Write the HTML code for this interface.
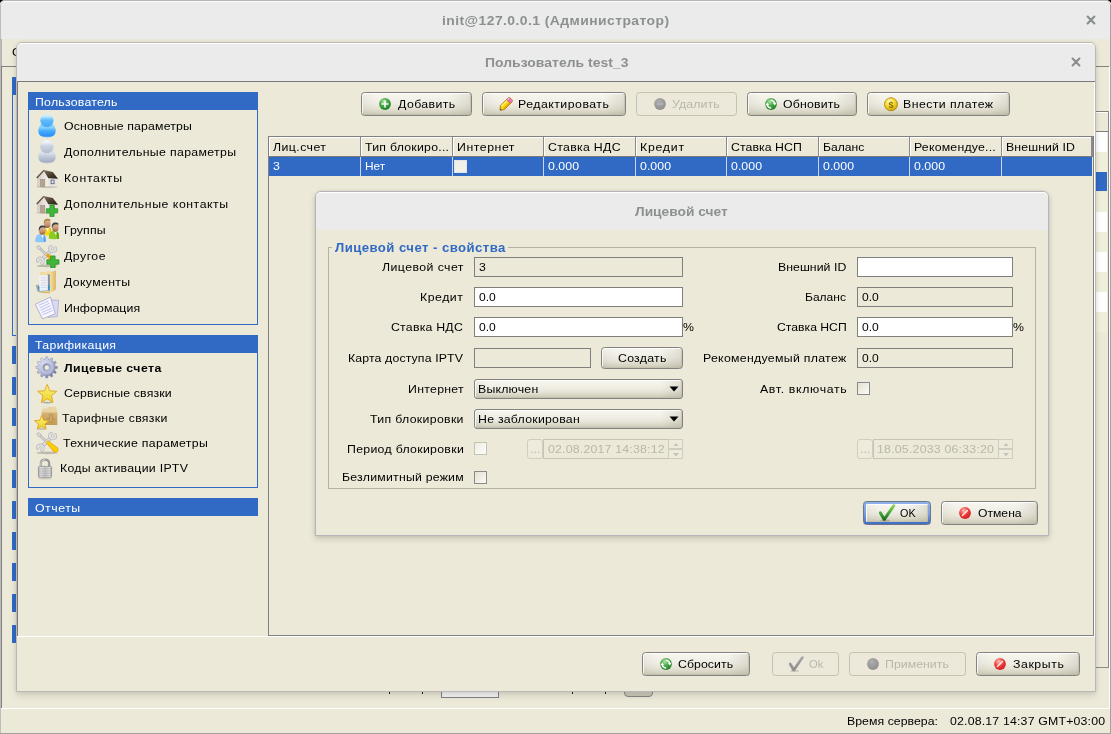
<!DOCTYPE html>
<html><head><meta charset="utf-8"><title>init@127.0.0.1</title>
<style>
html,body{margin:0;padding:0;}
body{width:1111px;height:734px;overflow:hidden;background:#000;position:relative;font-family:"Liberation Sans", sans-serif;}
div,span,svg{position:absolute;box-sizing:border-box;}
.t{white-space:pre;line-height:16px;height:16px;transform-origin:0 0;font-family:"Liberation Sans", sans-serif;}
.btn{border:1px solid #828282;border-radius:3.5px;background:linear-gradient(90deg,rgba(120,115,90,.07),rgba(120,115,90,0) 14px,rgba(120,115,90,0) calc(100% - 22px),rgba(120,115,90,.16)),linear-gradient(180deg,#f8f7f0 0%,#efede3 45%,#d9d6c5 100%);box-shadow:inset 1px 1px 0 rgba(255,255,255,.8),inset -1px -1px 0 rgba(190,186,166,.6),inset 0 -4px 5px -2px rgba(150,145,120,.25);}
.btnd{border:1px solid #c3c1b1;border-radius:3.5px;background:#ede9da;}
.inp{border:1px solid #7f7f7f;background:#fff;}
.inpd{border:1px solid #7f7f7f;background:#ECE9D8;}
.cb{border:1px solid #8a8a8a;background:linear-gradient(135deg,#e4e1d2,#fbfaf6);}
#root{left:0;top:0;width:1111px;height:734px;will-change:transform;}
</style></head><body><div id="root">
<svg width="0" height="0" style="left:0;top:0"><defs>
<radialGradient id="gBlue" cx="50%" cy="30%" r="70%"><stop offset="0" stop-color="#b9e4ff"/><stop offset=".55" stop-color="#4fb4fb"/><stop offset="1" stop-color="#1f8fe8"/></radialGradient>
<radialGradient id="gGray" cx="50%" cy="30%" r="70%"><stop offset="0" stop-color="#eef1f7"/><stop offset=".55" stop-color="#c3ccda"/><stop offset="1" stop-color="#a3aec0"/></radialGradient>
<radialGradient id="gGreen" cx="40%" cy="30%" r="75%"><stop offset="0" stop-color="#b4e2ac"/><stop offset=".45" stop-color="#4aaa48"/><stop offset="1" stop-color="#1c7a24"/></radialGradient>
<radialGradient id="gRed" cx="40%" cy="30%" r="75%"><stop offset="0" stop-color="#ffc4c0"/><stop offset=".5" stop-color="#f03c38"/><stop offset="1" stop-color="#cf1c20"/></radialGradient>
<radialGradient id="gGold" cx="40%" cy="30%" r="75%"><stop offset="0" stop-color="#fffbc0"/><stop offset=".5" stop-color="#f3dc22"/><stop offset="1" stop-color="#c89c12"/></radialGradient>
<radialGradient id="gDis" cx="40%" cy="30%" r="75%"><stop offset="0" stop-color="#adadad"/><stop offset="1" stop-color="#8e8e8e"/></radialGradient>
<linearGradient id="gStar" x1="0" y1="0" x2="0" y2="1"><stop offset="0" stop-color="#fbf48c"/><stop offset="1" stop-color="#ead21e"/></linearGradient>
<linearGradient id="gGear" x1="0" y1="0" x2="1" y2="1"><stop offset="0" stop-color="#fafbff"/><stop offset=".4" stop-color="#c0c5de"/><stop offset="1" stop-color="#555c88"/></linearGradient>
<linearGradient id="gBox" x1="0" y1="0" x2="0" y2="1"><stop offset="0" stop-color="#d6b274"/><stop offset="1" stop-color="#c39a52"/></linearGradient>
<linearGradient id="gLock" x1="0" y1="0" x2="1" y2="0"><stop offset="0" stop-color="#b4b4b4"/><stop offset=".18" stop-color="#e4e4e4"/><stop offset=".5" stop-color="#c4c4c4"/><stop offset=".84" stop-color="#e0e0e0"/><stop offset="1" stop-color="#b0b0b0"/></linearGradient>
<linearGradient id="gWallF" x1="0" y1="0" x2="1" y2="0"><stop offset="0" stop-color="#d5cac4"/><stop offset="1" stop-color="#f3eeea"/></linearGradient>
<linearGradient id="gRoof" x1="0" y1="0" x2="1" y2="1"><stop offset="0" stop-color="#8a7a5c"/><stop offset=".5" stop-color="#4e4230"/><stop offset="1" stop-color="#221d14"/></linearGradient>
<linearGradient id="gSkin" x1="0" y1="0" x2="0" y2="1"><stop offset="0" stop-color="#e2b896"/><stop offset=".6" stop-color="#c89876"/><stop offset="1" stop-color="#8e5e3e"/></linearGradient>
<linearGradient id="gHandle" x1="0" y1="1" x2="1" y2="0"><stop offset="0" stop-color="#f29a08"/><stop offset=".5" stop-color="#f8d400"/><stop offset="1" stop-color="#f2a20c"/></linearGradient>
<linearGradient id="gFold" x1="0" y1="0" x2="1" y2="0"><stop offset="0" stop-color="#f7dfa4"/><stop offset="1" stop-color="#dcb465"/></linearGradient>
<radialGradient id="gGear2" cx="35%" cy="30%" r="80%"><stop offset="0" stop-color="#dfe2f2"/><stop offset="1" stop-color="#a4aacd"/></radialGradient>
<linearGradient id="gBlueH" x1="0" y1="0" x2="0" y2="1"><stop offset="0" stop-color="#d6f3ff"/><stop offset=".2" stop-color="#bfeaff"/><stop offset=".5" stop-color="#5bbcff"/><stop offset="1" stop-color="#49a8f6"/></linearGradient>
<linearGradient id="gBlueB" x1="0" y1="0" x2="0" y2="1"><stop offset="0" stop-color="#8fd6ff"/><stop offset=".3" stop-color="#86d2ff"/><stop offset=".55" stop-color="#44abff"/><stop offset=".88" stop-color="#2f92f8"/><stop offset="1" stop-color="#74b6f4"/></linearGradient>
<linearGradient id="gBlueS" x1="0" y1="0" x2="0" y2="1"><stop offset="0" stop-color="#3f9cec" stop-opacity="0"/><stop offset="1" stop-color="#2f8ce0"/></linearGradient>
<linearGradient id="gGrayH" x1="0" y1="0" x2="0" y2="1"><stop offset="0" stop-color="#f6f8fc"/><stop offset=".2" stop-color="#eceff6"/><stop offset=".5" stop-color="#c9d1de"/><stop offset="1" stop-color="#b5bfcf"/></linearGradient>
<linearGradient id="gGrayB" x1="0" y1="0" x2="0" y2="1"><stop offset="0" stop-color="#dfe4ee"/><stop offset=".3" stop-color="#d8dee9"/><stop offset=".55" stop-color="#bcc6d5"/><stop offset=".88" stop-color="#a5b0c3"/><stop offset="1" stop-color="#c1c9d7"/></linearGradient>
<linearGradient id="gGrayS" x1="0" y1="0" x2="0" y2="1"><stop offset="0" stop-color="#98a4b8" stop-opacity="0"/><stop offset="1" stop-color="#8e9ab0"/></linearGradient>
<linearGradient id="gChk" x1="0" y1="0" x2="0" y2="1"><stop offset="0" stop-color="#86d456"/><stop offset=".55" stop-color="#3fa63a"/><stop offset="1" stop-color="#1a6e1e"/></linearGradient>
<linearGradient id="gChkD" x1="0" y1="0" x2="0" y2="1"><stop offset="0" stop-color="#a6a6a6"/><stop offset="1" stop-color="#8c8c8c"/></linearGradient>
<linearGradient id="gGear3" x1="0" y1="0" x2="1" y2="1"><stop offset="0" stop-color="#7f87b2"/><stop offset="1" stop-color="#b9bedb"/></linearGradient>
</defs></svg>
<div style="left:0;top:0;width:1111px;height:734px;background:#ECE9D8;border-radius:5px 5px 0 0;overflow:hidden"></div>
<div style="left:0px;top:0px;width:1111px;height:39px;background:#EBEBEB;border-radius:5px 5px 0 0;border-top:1px solid #b6b6b6;box-shadow:inset 0 1px 0 #fbfbfb,inset 1px 0 0 #bcbcbc,inset -1px 0 0 #a8a8a8;"></div>
<div style="left:0px;top:5px;width:1px;height:729px;background:#bcbcbc;"></div>
<div style="left:1110px;top:5px;width:1px;height:729px;background:#a3a3a3;"></div>
<div style="left:0px;top:733px;width:1111px;height:1px;background:#a3a3a3;"></div>
<span class="t" style="left:441.5px;top:12.5px;color:#8d9091;font-size:13px;letter-spacing:0.4px;transform:scaleX(1.07);font-weight:bold;">init@127.0.0.1 (Администратор)</span>
<svg style="left:1086px;top:15px" width="10" height="10" viewBox="0 0 10 10"><path d="M1.6 1.6 L8.4 8.4 M8.4 1.6 L1.6 8.4" stroke="#8a8d8e" stroke-width="2.1" stroke-linecap="round"/></svg>
<span class="t" style="left:12px;top:44.02px;color:#000;font-size:11.5px;letter-spacing:0px;transform:scaleX(1.07);">С</span>
<div style="left:1px;top:66px;width:1108px;height:1px;background:#808080;"></div>
<div style="left:1px;top:66px;width:1px;height:642px;background:#808080;"></div>
<div style="left:1px;top:39px;width:1px;height:27px;background:#b0b0b0;"></div>
<div style="left:1109px;top:67px;width:1px;height:641px;background:#fff;"></div>
<div style="left:12px;top:77px;width:6px;height:18px;background:#316AC5;"></div>
<div style="left:12px;top:95px;width:1px;height:241px;background:#316AC5;"></div>
<div style="left:12px;top:335px;width:6px;height:1px;background:#316AC5;"></div>
<div style="left:12px;top:346px;width:6px;height:18px;background:#316AC5;"></div>
<div style="left:12px;top:377px;width:6px;height:18px;background:#316AC5;"></div>
<div style="left:12px;top:408px;width:6px;height:18px;background:#316AC5;"></div>
<div style="left:12px;top:439px;width:6px;height:18px;background:#316AC5;"></div>
<div style="left:12px;top:470px;width:6px;height:18px;background:#316AC5;"></div>
<div style="left:12px;top:501px;width:6px;height:18px;background:#316AC5;"></div>
<div style="left:12px;top:532px;width:6px;height:18px;background:#316AC5;"></div>
<div style="left:12px;top:563px;width:6px;height:18px;background:#316AC5;"></div>
<div style="left:12px;top:594px;width:6px;height:18px;background:#316AC5;"></div>
<div style="left:12px;top:625px;width:6px;height:18px;background:#316AC5;"></div>
<div style="left:1090px;top:111px;width:19px;height:21px;background:#ECE9D8;border:1px solid #808080;box-shadow:inset 1px 1px 0 #fff;"></div>
<div style="left:1090px;top:132px;width:17px;height:20px;background:#fff;"></div>
<div style="left:1090px;top:152px;width:17px;height:20px;background:#F0EFDC;"></div>
<div style="left:1090px;top:172px;width:17px;height:19px;background:#316AC5;"></div>
<div style="left:1090px;top:192px;width:17px;height:20px;background:#F0EFDC;"></div>
<div style="left:1090px;top:212px;width:17px;height:20px;background:#fff;"></div>
<div style="left:1090px;top:232px;width:17px;height:20px;background:#F0EFDC;"></div>
<div style="left:1090px;top:252px;width:17px;height:20px;background:#fff;"></div>
<div style="left:1090px;top:272px;width:17px;height:20px;background:#F0EFDC;"></div>
<div style="left:1090px;top:292px;width:17px;height:20px;background:#fff;"></div>
<div style="left:1090px;top:312px;width:17px;height:20px;background:#F0EFDC;"></div>
<div style="left:1108px;top:111px;width:1px;height:557px;background:#8c8c8c;"></div>
<div style="left:1090px;top:667px;width:19px;height:1px;background:#8c8c8c;"></div>
<div style="left:441px;top:686px;width:58px;height:12px;background:#f4f4f4;border:1px solid #808080;"></div>
<div style="left:624px;top:680px;width:29px;height:17px;border:1px solid #868686;border-radius:4px;background:linear-gradient(180deg,#f1efe4,#c9c6b5);"></div>
<div style="left:389px;top:691px;width:1px;height:3px;background:#222;"></div>
<div style="left:422px;top:691px;width:1px;height:3px;background:#222;"></div>
<div style="left:572px;top:691px;width:1px;height:3px;background:#222;"></div>
<div style="left:605px;top:691px;width:1px;height:3px;background:#222;"></div>
<div style="left:1px;top:708px;width:1109px;height:1px;background:#fff;"></div>
<span class="t" style="left:846.5px;top:713.02px;color:#000;font-size:11.5px;letter-spacing:0.03px;transform:scaleX(1.07);">Время сервера:</span>
<span class="t" style="left:949.5px;top:713.02px;color:#000;font-size:11.5px;letter-spacing:0.17px;transform:scaleX(1.07);">02.08.17 14:37 GMT+03:00</span>
<div style="left:16px;top:42px;width:1080px;height:650px;background:#ECE9D8;border:1px solid #b8b8b8;border-radius:6px 6px 0 0;box-shadow:0 4px 6px rgba(0,0,0,.11),0 0 4px rgba(0,0,0,.07);"></div>
<div style="left:17px;top:43px;width:1078px;height:38px;background:#EBEBEB;border-radius:5px 5px 0 0;border-top:1px solid #fff;"></div>
<div style="left:17px;top:81px;width:1078px;height:1px;background:#7a7a7a;"></div>
<div style="left:17px;top:82px;width:1px;height:554px;background:#7a7a7a;"></div>
<div style="left:1094px;top:82px;width:1px;height:555px;background:#fff;"></div>
<div style="left:17px;top:636px;width:1078px;height:1px;background:#fff;"></div>
<span class="t" style="left:485px;top:54.5px;color:#8d9091;font-size:13px;letter-spacing:0.04px;transform:scaleX(1.07);font-weight:bold;">Пользователь test_3</span>
<svg style="left:1071px;top:57px" width="10" height="10" viewBox="0 0 10 10"><path d="M1.6 1.6 L8.4 8.4 M8.4 1.6 L1.6 8.4" stroke="#8a8d8e" stroke-width="2.1" stroke-linecap="round"/></svg>
<div style="left:28px;top:92px;width:230px;height:233px;border:1px solid #316AC5;"></div>
<div style="left:28px;top:92px;width:230px;height:18px;background:#316AC5;"></div>
<span class="t" style="left:34.5px;top:94.02px;color:#fff;font-size:11.5px;letter-spacing:0.22px;transform:scaleX(1.07);">Пользователь</span>
<span class="t" style="left:63.5px;top:118.02px;color:#000;font-size:11.5px;letter-spacing:0.15px;transform:scaleX(1.07);">Основные параметры</span>
<span class="t" style="left:63.5px;top:144.02px;color:#000;font-size:11.5px;letter-spacing:0.32px;transform:scaleX(1.07);">Дополнительные параметры</span>
<span class="t" style="left:63.5px;top:170.02px;color:#000;font-size:11.5px;letter-spacing:0.65px;transform:scaleX(1.07);">Контакты</span>
<span class="t" style="left:63.5px;top:196.02px;color:#000;font-size:11.5px;letter-spacing:0.5px;transform:scaleX(1.07);">Дополнительные контакты</span>
<span class="t" style="left:63.5px;top:222.02px;color:#000;font-size:11.5px;letter-spacing:0.09px;transform:scaleX(1.07);">Группы</span>
<span class="t" style="left:63.5px;top:248.02px;color:#000;font-size:11.5px;letter-spacing:0.45px;transform:scaleX(1.07);">Другое</span>
<span class="t" style="left:63.5px;top:274.02px;color:#000;font-size:11.5px;letter-spacing:0.32px;transform:scaleX(1.07);">Документы</span>
<span class="t" style="left:63.5px;top:300.02px;color:#000;font-size:11.5px;letter-spacing:0.08px;transform:scaleX(1.07);">Информация</span>
<svg style="left:35px;top:113px" width="24" height="26" viewBox="0 0 24 26"><path d="M3.3 18 Q3.3 13 7 10.4 L17 10.4 Q20.7 13 20.7 18 Q20.7 24.4 12 24.4 Q3.3 24.4 3.3 18 Z" fill="url(#gBlueB)"/><ellipse cx="11.9" cy="7.6" rx="6.7" ry="6.6" fill="url(#gBlueS)" opacity=".55"/><ellipse cx="11.9" cy="7.2" rx="6.4" ry="6.3" fill="url(#gBlueH)"/></svg>
<svg style="left:35px;top:139px" width="24" height="26" viewBox="0 0 24 26"><path d="M3.3 18 Q3.3 13 7 10.4 L17 10.4 Q20.7 13 20.7 18 Q20.7 24.4 12 24.4 Q3.3 24.4 3.3 18 Z" fill="url(#gGrayB)"/><ellipse cx="11.9" cy="7.6" rx="6.7" ry="6.6" fill="url(#gGrayS)" opacity=".55"/><ellipse cx="11.9" cy="7.2" rx="6.4" ry="6.3" fill="url(#gGrayH)"/></svg>
<svg style="left:35px;top:166px" width="24" height="26" viewBox="0 0 24 26"><ellipse cx="12" cy="20.8" rx="10.6" ry="1" fill="#000" opacity=".22"/><path d="M2.2 11.2 L8.5 4.6 L13 11.4 L13 20.6 L2.2 20.6Z" fill="url(#gWallF)"/><path d="M13 11.4 L22.4 12 L22.4 20.4 L13 20.6Z" fill="#ebe6e0"/><path d="M8.4 3.9 L17.8 6 L23 12.7 L13.3 12.3 Z" fill="url(#gRoof)"/><path d="M1.2 11.6 L8.4 3.9 L9.4 4.7 L2.3 12.4 Z" fill="#5e5040"/><rect x="5.4" y="13.4" width="4.4" height="7.2" fill="#b5a28f" stroke="#9a8a7a" stroke-width=".5"/><rect x="16.1" y="14.1" width="3" height="3.6" fill="#dfe6f0" stroke="#5b6684" stroke-width=".9"/></svg>
<svg style="left:35px;top:192px" width="24" height="26" viewBox="0 0 24 26"><ellipse cx="12" cy="20.8" rx="10.6" ry="1" fill="#000" opacity=".22"/><path d="M2.2 11.2 L8.5 4.6 L13 11.4 L13 20.6 L2.2 20.6Z" fill="url(#gWallF)"/><path d="M13 11.4 L22.4 12 L22.4 20.4 L13 20.6Z" fill="#ebe6e0"/><path d="M8.4 3.9 L17.8 6 L23 12.7 L13.3 12.3 Z" fill="url(#gRoof)"/><path d="M1.2 11.6 L8.4 3.9 L9.4 4.7 L2.3 12.4 Z" fill="#5e5040"/><rect x="5.4" y="13.4" width="4.4" height="7.2" fill="#b5a28f" stroke="#9a8a7a" stroke-width=".5"/><rect x="16.1" y="14.1" width="3" height="3.6" fill="#dfe6f0" stroke="#5b6684" stroke-width=".9"/><path d="M14.948 13.100000000000001 h4.104 v3.648 h3.648 v4.104 h-3.648 v3.648 h-4.104 v-3.648 h-3.648 v-4.104 h3.648 Z" fill="#3fb53a" stroke="#1f8f22" stroke-width=".7"/></svg>
<svg style="left:35px;top:218px" width="27" height="26" viewBox="0 0 27 26"><path d="M8.600000000000001 16.9 Q8.400000000000002 9.3 12.3 9.1 Q16.2 9.3 16.0 16.9 Q12.3 18.1 8.600000000000001 16.9Z" fill="#f6d616"/><path d="M14.5 10.3 L15.9 9.899999999999999 Q16.2 11.3 16.0 16.9 L15.5 17.3Z" fill="#e2b800"/><path d="M10.9 9.7 L13.700000000000001 9.7 L13.100000000000001 14.100000000000001Z" fill="#fff" opacity=".85"/><ellipse cx="12.3" cy="5.7" rx="3.3" ry="4.3" fill="url(#gSkin)"/><path d="M8.8 6.3 Q8.100000000000001 0.7000000000000002 12.3 0.7000000000000002 Q15.9 0.5 15.5 3.0999999999999996 Q12.8 1.9 10.5 3.3 Q9.700000000000001 4.7 8.8 6.3Z" fill="#a98a3c"/><path d="M13.700000000000003 20.6 Q13.500000000000004 13 18.900000000000002 12.8 Q24.3 13 24.1 20.6 Q18.900000000000002 21.8 13.700000000000003 20.6Z" fill="#8ccc22"/><path d="M21.1 14 L22.500000000000004 13.6 Q24.3 15 24.1 20.6 L22.1 21Z" fill="#62a80e"/><path d="M18.900000000000002 13.4 L21.7 13.4 L21.1 17.8Z" fill="#fff" opacity=".85"/><ellipse cx="20.3" cy="9.4" rx="3.3" ry="4.3" fill="url(#gSkin)"/><path d="M16.8 10 Q16.1 4.4 20.3 4.4 Q23.900000000000002 4.2 23.5 6.8 Q20.8 5.6 18.5 7 Q17.7 8.4 16.8 10Z" fill="#3c4044"/><path d="M0.09999999999999964 23.7 Q-0.10000000000000037 16.1 5.5 15.899999999999999 Q11.1 16.1 10.9 23.7 Q5.5 24.9 0.09999999999999964 23.7Z" fill="#8ec8fa"/><path d="M7.7 17.1 L9.1 16.7 Q11.1 18.1 10.9 23.7 L8.7 24.1Z" fill="#5ea6ee"/><path d="M5.9 16.5 L8.7 16.5 L8.1 20.9Z" fill="#fff" opacity=".85"/><ellipse cx="7.3" cy="12.5" rx="3.3" ry="4.3" fill="url(#gSkin)"/><path d="M3.8 13.1 Q3.0999999999999996 7.5 7.3 7.5 Q10.9 7.3 10.5 9.899999999999999 Q7.8 8.7 5.5 10.1 Q4.699999999999999 11.5 3.8 13.1Z" fill="#3c4044"/></svg>
<svg style="left:35px;top:244px" width="25" height="24" viewBox="0 0 25 24"><ellipse cx="12" cy="21.9" rx="10.6" ry="1.3" fill="#000" opacity=".2"/><path d="M3.6 3.4 L12.4 11.4" fill="none" stroke="#a4a4a4" stroke-width="2.6" stroke-linecap="round"/><path d="M3.6 3.4 L12.4 11.4" fill="none" stroke="#d4d4d4" stroke-width="1.5" stroke-linecap="round"/><ellipse cx="3.9" cy="3.6" rx="2.1" ry="1.6" transform="rotate(40 3.9 3.6)" fill="#dedede" stroke="#a8a8a8" stroke-width=".6"/><path d="M6.9 15.3 L16.2 6.7" fill="none" stroke="#b0b0b0" stroke-width="3.8" stroke-linecap="butt"/><path d="M6.9 15.3 L16.2 6.7" fill="none" stroke="#d8d8d8" stroke-width="2.8" stroke-linecap="butt"/><path d="M2.6 17 A2.7 2.7 0 1 1 6.96 19.13" fill="none" stroke="#b0b0b0" stroke-width="3.3" stroke-linecap="round"/><path d="M2.6 17 A2.7 2.7 0 1 1 6.96 19.13" fill="none" stroke="#e0e0e0" stroke-width="2.2" stroke-linecap="round"/><path d="M20.31 4.1 A2.7 2.7 0 1 1 16.08 2.64" fill="none" stroke="#b0b0b0" stroke-width="3.3" stroke-linecap="round"/><path d="M20.31 4.1 A2.7 2.7 0 1 1 16.08 2.64" fill="none" stroke="#e0e0e0" stroke-width="2.2" stroke-linecap="round"/><path d="M11 11.4 L13 9.7 L17.4 13.6 L15 16 Z" fill="#f2a80c" stroke="#d88a00" stroke-width=".5"/><path d="M19.6 20.2 L21.4 19.6 L21.6 21 Z" fill="#f09a10"/><path d="M15.703999999999999 11.9 h4.3919999999999995 v3.904 h3.904 v4.3919999999999995 h-3.904 v3.904 h-4.3919999999999995 v-3.904 h-3.904 v-4.3919999999999995 h3.904 Z" fill="#3fb53a" stroke="#1f8f22" stroke-width=".7"/></svg>
<svg style="left:35px;top:270px" width="24" height="24" viewBox="0 0 24 24"><path d="M0.6 15 L4.2 14.4 L4.6 22.6 L2.2 21.4 Z" fill="#000" opacity=".22"/><path d="M5 2.6 L15.4 1.6 L15.4 22.6 L5 22.2 Z" fill="#e9c982"/><path d="M5 2.6 L15.4 1.6 L15.4 4.4 L5 5.2 Z" fill="#f3dca0"/><path d="M12.6 4.4 L15 4.2 L15 17.4 L12.6 17.6 Z" fill="#8493a4"/><path d="M2.3 16.6 L15.8 14.6 L15.8 20.6 L4 21.4 Z" fill="#3b92cb"/><path d="M4.1 5.3 L12.7 4.9 L12.9 20.6 L4.5 21 Z" fill="#f0f0f8"/><path d="M5.8 8 L11.4 7.8 M5.8 10.4 L11.4 10.2 M5.8 12.8 L11.4 12.6 M5.8 15.2 L11.4 15 M5.8 17.6 L11.4 17.4" stroke="#cfd2e2" stroke-width=".8"/><path d="M14.9 2.2 L20.9 0.5 L20.9 19.4 L14.9 23.2 Z" fill="url(#gFold)"/><path d="M5 22.2 L15 22.6 L14.9 23.2 L7 22.9 Z" fill="#c9a050"/></svg>
<svg style="left:35px;top:296px" width="25" height="24" viewBox="0 0 25 24"><path d="M14.4 4 L23.7 4.3 L22.2 20.5 L13 21.3 Z" fill="#d9daf5" stroke="#a9abcb" stroke-width=".8"/><path d="M0.3 8.3 L15.5 1.1 L20.3 17.8 L7.5 22.8 Z" fill="#f6f6ff" stroke="#a9abcb" stroke-width=".9"/><path d="M3.4 9.6 L13.4 5 M4.5 11.9 L14.5 7.3 M5.6 14.2 L15.6 9.6 M6.7 16.5 L16.7 11.9 M7.8 18.8 L17.8 14.2" stroke="#c6c7ee" stroke-width="1.1"/></svg>
<div style="left:28px;top:335px;width:230px;height:153px;border:1px solid #316AC5;"></div>
<div style="left:28px;top:335px;width:230px;height:18px;background:#316AC5;"></div>
<span class="t" style="left:34.5px;top:337.02px;color:#fff;font-size:11.5px;letter-spacing:0.32px;transform:scaleX(1.07);">Тарификация</span>
<span class="t" style="left:64px;top:360.02px;color:#000;font-size:11.5px;letter-spacing:0.4px;transform:scaleX(1.07);font-weight:bold;">Лицевые счета</span>
<span class="t" style="left:63.6px;top:385.02px;color:#000;font-size:11.5px;letter-spacing:0.16px;transform:scaleX(1.07);">Сервисные связки</span>
<span class="t" style="left:62px;top:410.02px;color:#000;font-size:11.5px;letter-spacing:0.32px;transform:scaleX(1.07);">Тарифные связки</span>
<span class="t" style="left:63px;top:435.02px;color:#000;font-size:11.5px;letter-spacing:0.29px;transform:scaleX(1.07);">Технические параметры</span>
<span class="t" style="left:60.4px;top:460.02px;color:#000;font-size:11.5px;letter-spacing:0.26px;transform:scaleX(1.07);">Коды активации IPTV</span>
<svg style="left:35px;top:356px" width="24" height="24" viewBox="0 0 24 24"><polygon points="10.79,0.74 12.61,0.74 13.10,3.22 14.57,3.61 16.24,1.71 17.82,2.62 17.01,5.02 18.08,6.09 20.48,5.28 21.39,6.86 19.49,8.53 19.88,10.00 22.36,10.49 22.36,12.31 19.88,12.80 19.49,14.27 21.39,15.94 20.48,17.52 18.08,16.71 17.01,17.78 17.82,20.18 16.24,21.09 14.57,19.19 13.10,19.58 12.61,22.06 10.79,22.06 10.30,19.58 8.83,19.19 7.16,21.09 5.58,20.18 6.39,17.78 5.32,16.71 2.92,17.52 2.01,15.94 3.91,14.27 3.52,12.80 1.04,12.31 1.04,10.49 3.52,10.00 3.91,8.53 2.01,6.86 2.92,5.28 5.32,6.09 6.39,5.02 5.58,2.62 7.16,1.71 8.83,3.61 10.30,3.22" fill="url(#gGear)" stroke="#7b82aa" stroke-width=".5" stroke-linejoin="round"/><circle cx="11.7" cy="11.4" r="7.4" fill="url(#gGear2)"/><circle cx="11.7" cy="11.4" r="4.2" fill="url(#gGear3)"/><circle cx="11.8" cy="11.5" r="2.2" fill="#efecd8"/></svg>
<svg style="left:35px;top:381px" width="24" height="24" viewBox="0 0 24 24"><ellipse cx="12.2" cy="21.6" rx="5" ry=".9" fill="#000" opacity=".25"/><polygon points="12.20,3.40 14.79,9.84 21.71,10.31 16.38,14.76 18.08,21.49 12.20,17.80 6.32,21.49 8.02,14.76 2.69,10.31 9.61,9.84" fill="url(#gStar)" stroke="#e0a41c" stroke-width=".9" stroke-linejoin="round"/></svg>
<svg style="left:34px;top:405px" width="25" height="25" viewBox="0 0 25 25"><path d="M7.7 7.2 L23.3 7.2 L23.3 20 L7.7 20 Z" fill="url(#gBox)"/><path d="M9.4 1.8 L22 1.8 L23.3 7.2 L7.7 7.2 Z" fill="#ead3a2"/><rect x="9.6" y="2.2" width="4" height="1.2" fill="#e8eef6"/><path d="M15.4 9.6 h3 v4.2 h2.2 l-3.7 4.4 l-3.7 -4.4 h2.2 Z" fill="none" stroke="#a8884c" stroke-width=".8" opacity=".8"/><ellipse cx="7.7" cy="24" rx="4.2" ry=".8" fill="#000" opacity=".22"/><polygon points="7.70,10.40 9.67,15.29 14.93,15.65 10.88,19.03 12.17,24.15 7.70,21.34 3.23,24.15 4.52,19.03 0.47,15.65 5.73,15.29" fill="url(#gStar)" stroke="#e0a41c" stroke-width=".9" stroke-linejoin="round"/></svg>
<svg style="left:35px;top:431px" width="25" height="24" viewBox="0 0 25 24"><ellipse cx="12" cy="21.9" rx="10.6" ry="1.3" fill="#000" opacity=".2"/><path d="M3.6 3.4 L12.4 11.4" fill="none" stroke="#a4a4a4" stroke-width="2.6" stroke-linecap="round"/><path d="M3.6 3.4 L12.4 11.4" fill="none" stroke="#d4d4d4" stroke-width="1.5" stroke-linecap="round"/><ellipse cx="3.9" cy="3.6" rx="2.1" ry="1.6" transform="rotate(40 3.9 3.6)" fill="#dedede" stroke="#a8a8a8" stroke-width=".6"/><path d="M6.9 15.3 L16.2 6.7" fill="none" stroke="#b0b0b0" stroke-width="3.8" stroke-linecap="butt"/><path d="M6.9 15.3 L16.2 6.7" fill="none" stroke="#d8d8d8" stroke-width="2.8" stroke-linecap="butt"/><path d="M2.6 17 A2.7 2.7 0 1 1 6.96 19.13" fill="none" stroke="#b0b0b0" stroke-width="3.3" stroke-linecap="round"/><path d="M2.6 17 A2.7 2.7 0 1 1 6.96 19.13" fill="none" stroke="#e0e0e0" stroke-width="2.2" stroke-linecap="round"/><path d="M20.31 4.1 A2.7 2.7 0 1 1 16.08 2.64" fill="none" stroke="#b0b0b0" stroke-width="3.3" stroke-linecap="round"/><path d="M20.31 4.1 A2.7 2.7 0 1 1 16.08 2.64" fill="none" stroke="#e0e0e0" stroke-width="2.2" stroke-linecap="round"/><path d="M11 11.5 L13 9.7 L22.6 16.8 Q24.2 19 22.4 20.8 Q20.2 22.2 18.2 20.2 Z" fill="url(#gHandle)" stroke="#e09000" stroke-width=".5"/></svg>
<svg style="left:33px;top:456px" width="24" height="24" viewBox="0 0 24 24"><path d="M7.8 11 V7.6 Q7.8 3.6 12 3.6 Q16.2 3.6 16.2 7.6 V11" fill="none" stroke="#9a9a9a" stroke-width="2.2"/><path d="M7.8 11 V7.6 Q7.8 3.6 12 3.6" fill="none" stroke="#d0d0d0" stroke-width="1"/><rect x="5.4" y="10.4" width="13.2" height="11" rx="1.2" fill="url(#gLock)" stroke="#7f7f7f" stroke-width=".6"/><path d="M5.6 12.8 h12.8 M5.6 15 h12.8 M5.6 17.2 h12.8 M5.6 19.4 h12.8" stroke="#8a8a8a" stroke-width=".6" opacity=".7"/><ellipse cx="12" cy="22.6" rx="7" ry="1" fill="#000" opacity=".12"/></svg>
<div style="left:28px;top:498px;width:230px;height:18px;background:#316AC5;"></div>
<span class="t" style="left:34.6px;top:500.02px;color:#fff;font-size:11.5px;letter-spacing:0.5px;transform:scaleX(1.07);">Отчеты</span>
<div class="btn" style="left:361px;top:92px;width:111px;height:24px;"></div>
<svg style="left:376.5px;top:96px" width="16" height="16" viewBox="0 0 16 16"><circle cx="8" cy="8" r="5.9" fill="url(#gGreen)"/><path d="M8 4.5 V11.5 M4.5 8 H11.5" stroke="#fff" stroke-width="1.7" opacity=".92"/></svg>
<span class="t" style="left:398px;top:96.02px;color:#000;font-size:11.5px;letter-spacing:0.38px;transform:scaleX(1.07);">Добавить</span>
<div class="btn" style="left:482px;top:92px;width:144px;height:24px;"></div>
<svg style="left:499px;top:97px" width="15" height="15" viewBox="0 0 15 15"><path d="M1.1 13.2 L1.3 8.8 L7.6 2.5 L11.5 6.4 L5.2 12.7 Z" fill="#fcd40a" stroke="#a8771c" stroke-width=".9" stroke-linejoin="round"/><path d="M2.4 9.2 L8.2 3.4" stroke="#fff27a" stroke-width="1.4"/><path d="M4.8 11.8 L10.6 6" stroke="#e9a406" stroke-width="1.5"/><path d="M7.6 2.5 L9.3 0.8 Q10.2 0.1 11.1 0.9 L13.1 2.9 Q13.9 3.8 13.2 4.7 L11.5 6.4 Z" fill="#f56ec8" stroke="#a8771c" stroke-width=".8" stroke-linejoin="round"/><path d="M8.6 2.6 L10 1.3" stroke="#ffc0ea" stroke-width="1.2"/><path d="M1.1 13.2 L1.2 11.4 L2.9 13.1 Z" fill="#3a4450"/></svg>
<span class="t" style="left:518.4px;top:96.02px;color:#000;font-size:11.5px;letter-spacing:0.46px;transform:scaleX(1.07);">Редактировать</span>
<div class="btnd" style="left:636px;top:92px;width:101px;height:24px;"></div>
<svg style="left:651.5px;top:96px" width="16" height="16" viewBox="0 0 16 16"><circle cx="8" cy="8" r="5.9" fill="url(#gDis)"/><path d="M4.6 8 H11.4" stroke="#b4b4b4" stroke-width="1.7"/></svg>
<span class="t" style="left:672.3px;top:96.02px;color:#b9b7a8;font-size:11.5px;letter-spacing:0.11px;transform:scaleX(1.07);">Удалить</span>
<div class="btn" style="left:747px;top:92px;width:110px;height:24px;"></div>
<svg style="left:763px;top:96px" width="16" height="16" viewBox="0 0 16 16"><circle cx="8" cy="8" r="5.9" fill="url(#gGreen)"/><path d="M8.3 4.2 A3.9 3.9 0 0 1 11.7 7.4" fill="none" stroke="#fff" stroke-width="1.5" stroke-linecap="round"/><path d="M9.9 7 L13.5 6.8 L11.8 9.6 Z" fill="#fff"/><path d="M7.7 11.9 A3.9 3.9 0 0 1 4.3 8.8" fill="none" stroke="#fff" stroke-width="1.5" stroke-linecap="round"/><path d="M2.5 9.2 L6.1 9 L4.2 6.4 Z" fill="#fff"/></svg>
<span class="t" style="left:783.4px;top:96.02px;color:#000;font-size:11.5px;letter-spacing:0.17px;transform:scaleX(1.07);">Обновить</span>
<div class="btn" style="left:867px;top:92px;width:143px;height:24px;"></div>
<svg style="left:883px;top:96px" width="16" height="16" viewBox="0 0 16 16"><circle cx="8" cy="8.3" r="6.5" fill="url(#gGold)" stroke="#b48614" stroke-width=".9"/><text x="8" y="11.6" text-anchor="middle" font-family="Liberation Sans, sans-serif" font-weight="bold" font-size="9" fill="#96690a">$</text></svg>
<span class="t" style="left:903.3px;top:96.02px;color:#000;font-size:11.5px;letter-spacing:0.41px;transform:scaleX(1.07);">Внести платеж</span>
<div style="left:268px;top:136px;width:826px;height:500px;border:1px solid #808080;"></div>
<div style="left:269px;top:137px;width:824px;height:20px;background:#ECE9D8;"></div>
<div style="left:269px;top:137px;width:824px;height:1px;background:#fff;"></div>
<div style="left:269px;top:156px;width:824px;height:1px;background:#7a7a7a;"></div>
<div style="left:269px;top:157px;width:823px;height:19px;background:#316AC5;"></div>
<div style="left:1091px;top:137px;width:2px;height:19px;background:#8a8a8a;"></div>
<div style="left:269px;top:138px;width:1px;height:18px;background:#fff;"></div>
<div style="left:360px;top:137px;width:1px;height:20px;background:#8a8a8a;"></div>
<div style="left:360px;top:157px;width:1px;height:19px;background:#c9d6ee;"></div>
<span class="t" style="left:273px;top:139.02px;color:#000;font-size:11.5px;letter-spacing:0.41px;transform:scaleX(1.07);">Лиц.счет</span>
<div style="left:361px;top:138px;width:1px;height:18px;background:#fff;"></div>
<div style="left:452px;top:137px;width:1px;height:20px;background:#8a8a8a;"></div>
<div style="left:452px;top:157px;width:1px;height:19px;background:#c9d6ee;"></div>
<span class="t" style="left:365px;top:139.02px;color:#000;font-size:11.5px;letter-spacing:0.23px;transform:scaleX(1.07);">Тип блокиро...</span>
<div style="left:453px;top:138px;width:1px;height:18px;background:#fff;"></div>
<div style="left:543px;top:137px;width:1px;height:20px;background:#8a8a8a;"></div>
<div style="left:543px;top:157px;width:1px;height:19px;background:#c9d6ee;"></div>
<span class="t" style="left:457px;top:139.02px;color:#000;font-size:11.5px;letter-spacing:0.51px;transform:scaleX(1.07);">Интернет</span>
<div style="left:544px;top:138px;width:1px;height:18px;background:#fff;"></div>
<div style="left:635px;top:137px;width:1px;height:20px;background:#8a8a8a;"></div>
<div style="left:635px;top:157px;width:1px;height:19px;background:#c9d6ee;"></div>
<span class="t" style="left:548px;top:139.02px;color:#000;font-size:11.5px;letter-spacing:0.29px;transform:scaleX(1.07);">Ставка НДС</span>
<div style="left:636px;top:138px;width:1px;height:18px;background:#fff;"></div>
<div style="left:726px;top:137px;width:1px;height:20px;background:#8a8a8a;"></div>
<div style="left:726px;top:157px;width:1px;height:19px;background:#c9d6ee;"></div>
<span class="t" style="left:640px;top:139.02px;color:#000;font-size:11.5px;letter-spacing:0.7px;transform:scaleX(1.07);">Кредит</span>
<div style="left:727px;top:138px;width:1px;height:18px;background:#fff;"></div>
<div style="left:818px;top:137px;width:1px;height:20px;background:#8a8a8a;"></div>
<div style="left:818px;top:157px;width:1px;height:19px;background:#c9d6ee;"></div>
<span class="t" style="left:731px;top:139.02px;color:#000;font-size:11.5px;letter-spacing:0.05px;transform:scaleX(1.07);">Ставка НСП</span>
<div style="left:819px;top:138px;width:1px;height:18px;background:#fff;"></div>
<div style="left:909px;top:137px;width:1px;height:20px;background:#8a8a8a;"></div>
<div style="left:909px;top:157px;width:1px;height:19px;background:#c9d6ee;"></div>
<span class="t" style="left:823px;top:139.02px;color:#000;font-size:11.5px;letter-spacing:0px;transform:scaleX(1.0547);">Баланс</span>
<div style="left:910px;top:138px;width:1px;height:18px;background:#fff;"></div>
<div style="left:1001px;top:137px;width:1px;height:20px;background:#8a8a8a;"></div>
<div style="left:1001px;top:157px;width:1px;height:19px;background:#c9d6ee;"></div>
<span class="t" style="left:914px;top:139.02px;color:#000;font-size:11.5px;letter-spacing:0.19px;transform:scaleX(1.07);">Рекомендуе...</span>
<div style="left:1002px;top:138px;width:1px;height:18px;background:#fff;"></div>
<span class="t" style="left:1006px;top:139.02px;color:#000;font-size:11.5px;letter-spacing:0.1px;transform:scaleX(1.07);">Внешний ID</span>
<span class="t" style="left:273px;top:158.02px;color:#fff;font-size:11.5px;letter-spacing:0px;transform:scaleX(1.07);">3</span>
<span class="t" style="left:364.6px;top:158.02px;color:#fff;font-size:11.5px;letter-spacing:0px;transform:scaleX(1.0309);">Нет</span>
<span class="t" style="left:548px;top:158.02px;color:#fff;font-size:11.5px;letter-spacing:0.05px;transform:scaleX(1.07);">0.000</span>
<span class="t" style="left:640px;top:158.02px;color:#fff;font-size:11.5px;letter-spacing:0.05px;transform:scaleX(1.07);">0.000</span>
<span class="t" style="left:731px;top:158.02px;color:#fff;font-size:11.5px;letter-spacing:0.05px;transform:scaleX(1.07);">0.000</span>
<span class="t" style="left:823px;top:158.02px;color:#fff;font-size:11.5px;letter-spacing:0.05px;transform:scaleX(1.07);">0.000</span>
<span class="t" style="left:914px;top:158.02px;color:#fff;font-size:11.5px;letter-spacing:0.05px;transform:scaleX(1.07);">0.000</span>
<div style="left:454px;top:160px;width:13px;height:13px;background:#F1F0E9;border:1px solid #dfe3ea;"></div>
<div class="btn" style="left:642px;top:652px;width:108px;height:24px;"></div>
<svg style="left:657.5px;top:656px" width="16" height="16" viewBox="0 0 16 16"><circle cx="8" cy="8" r="5.9" fill="url(#gGreen)"/><path d="M8.3 4.2 A3.9 3.9 0 0 1 11.7 7.4" fill="none" stroke="#fff" stroke-width="1.5" stroke-linecap="round"/><path d="M9.9 7 L13.5 6.8 L11.8 9.6 Z" fill="#fff"/><path d="M7.7 11.9 A3.9 3.9 0 0 1 4.3 8.8" fill="none" stroke="#fff" stroke-width="1.5" stroke-linecap="round"/><path d="M2.5 9.2 L6.1 9 L4.2 6.4 Z" fill="#fff"/></svg>
<span class="t" style="left:678.2px;top:656.02px;color:#000;font-size:11.5px;letter-spacing:0.05px;transform:scaleX(1.07);">Сбросить</span>
<div class="btnd" style="left:772px;top:652px;width:67px;height:24px;"></div>
<svg style="left:788.9px;top:655.9px" width="18" height="19" viewBox="0 0 18 19"><g transform="scale(1.0)"><ellipse cx="5.6" cy="14.9" rx="4.4" ry=".9" fill="#000" opacity=".16"/><path d="M1.2 8 L4.8 14 L13.4 1.6" fill="none" stroke="url(#gChkD)" stroke-width="2.7" stroke-linecap="round" stroke-linejoin="round"/></g></svg>
<span class="t" style="left:808.6px;top:656.02px;color:#b9b7a8;font-size:11.5px;letter-spacing:0px;transform:scaleX(0.9794);">Ok</span>
<div class="btnd" style="left:849px;top:652px;width:117px;height:24px;"></div>
<svg style="left:864.5px;top:656px" width="16" height="16" viewBox="0 0 16 16"><circle cx="8" cy="8" r="5.9" fill="url(#gDis)"/></svg>
<span class="t" style="left:885.2px;top:656.02px;color:#b9b7a8;font-size:11.5px;letter-spacing:0.03px;transform:scaleX(1.07);">Применить</span>
<div class="btn" style="left:976px;top:652px;width:104px;height:24px;"></div>
<svg style="left:992px;top:656px" width="16" height="16" viewBox="0 0 16 16"><circle cx="8" cy="8" r="5.9" fill="url(#gRed)"/><path d="M5.4 10.6 L10.5 5.4" stroke="#f1eeee" stroke-width="1.4" stroke-linecap="round"/></svg>
<span class="t" style="left:1012.6px;top:656.02px;color:#000;font-size:11.5px;letter-spacing:0.53px;transform:scaleX(1.07);">Закрыть</span>
<div style="left:315px;top:191px;width:734px;height:345px;background:#ECE9D8;border:1px solid #b6b6ba;border-radius:6px 6px 0 0;box-shadow:0 3px 6px rgba(0,0,0,.15),0 0 3px rgba(0,0,0,.10);"></div>
<div style="left:316px;top:192px;width:732px;height:38px;background:#EBEBEB;border-radius:5px 5px 0 0;border-top:1px solid #fff;"></div>
<span class="t" style="left:635px;top:203.5px;color:#8d9091;font-size:13px;letter-spacing:0px;transform:scaleX(1.0585);font-weight:bold;">Лицевой счет</span>
<div style="left:328px;top:247px;width:708px;height:242px;border:1px solid #b4b2a3;"></div>
<div style="left:332px;top:245px;width:176px;height:6px;background:#ECE9D8;"></div>
<span class="t" style="left:334.9px;top:239.74px;color:#316AC5;font-size:12.3px;letter-spacing:0.41px;transform:scaleX(1.07);font-weight:bold;">Лицевой счет - свойства</span>
<span class="t" style="left:381.8px;top:259.02px;color:#000;font-size:11.5px;letter-spacing:0.4px;transform:scaleX(1.07);">Лицевой счет</span>
<span class="t" style="left:420.3px;top:289.02px;color:#000;font-size:11.5px;letter-spacing:0.49px;transform:scaleX(1.07);">Кредит</span>
<span class="t" style="left:391.4px;top:319.02px;color:#000;font-size:11.5px;letter-spacing:0.21px;transform:scaleX(1.07);">Ставка НДС</span>
<span class="t" style="left:348.3px;top:350.02px;color:#000;font-size:11.5px;letter-spacing:0.12px;transform:scaleX(1.07);">Карта доступа IPTV</span>
<span class="t" style="left:407.5px;top:381.02px;color:#000;font-size:11.5px;letter-spacing:0.27px;transform:scaleX(1.07);">Интернет</span>
<span class="t" style="left:369.7px;top:411.02px;color:#000;font-size:11.5px;letter-spacing:0.3px;transform:scaleX(1.07);">Тип блокировки</span>
<span class="t" style="left:346.5px;top:441.02px;color:#000;font-size:11.5px;letter-spacing:0.28px;transform:scaleX(1.07);">Период блокировки</span>
<span class="t" style="left:341.5px;top:469.02px;color:#000;font-size:11.5px;letter-spacing:0.2px;transform:scaleX(1.07);">Безлимитный режим</span>
<div class="inpd" style="left:474px;top:257px;width:209px;height:20px"></div>
<span class="t" style="left:478.5px;top:259.02px;color:#000;font-size:11.5px;letter-spacing:0px;transform:scaleX(1.07);">3</span>
<div class="inp" style="left:474px;top:287px;width:209px;height:20px"></div>
<span class="t" style="left:478.5px;top:289.02px;color:#000;font-size:11.5px;letter-spacing:0px;transform:scaleX(1.05);">0.0</span>
<div class="inp" style="left:474px;top:317px;width:209px;height:20px"></div>
<span class="t" style="left:478.5px;top:319.02px;color:#000;font-size:11.5px;letter-spacing:0px;transform:scaleX(1.05);">0.0</span>
<span class="t" style="left:683px;top:319.02px;color:#000;font-size:11.5px;letter-spacing:0px;transform:scaleX(1.07);">%</span>
<div class="inpd" style="left:474px;top:348px;width:117px;height:20px"></div>
<div class="btn" style="left:601px;top:347px;width:82px;height:22px"></div>
<span class="t" style="left:617.7px;top:350.02px;color:#000;font-size:11.5px;letter-spacing:0.24px;transform:scaleX(1.07);">Создать</span>
<div class="btn" style="left:474px;top:379px;width:209px;height:20px;border-radius:3px"></div>
<span class="t" style="left:478.3px;top:381.02px;color:#000;font-size:11.5px;letter-spacing:0.19px;transform:scaleX(1.07);">Выключен</span>
<svg style="left:669px;top:386px" width="10" height="6" viewBox="0 0 10 6"><path d="M0.5 0.5 L9.5 0.5 L5 5.5 Z" fill="#000"/></svg>
<div class="btn" style="left:474px;top:409px;width:209px;height:20px;border-radius:3px"></div>
<span class="t" style="left:478.3px;top:411.02px;color:#000;font-size:11.5px;letter-spacing:0.23px;transform:scaleX(1.07);">Не заблокирован</span>
<svg style="left:669px;top:416px" width="10" height="6" viewBox="0 0 10 6"><path d="M0.5 0.5 L9.5 0.5 L5 5.5 Z" fill="#000"/></svg>
<div style="left:474px;top:442px;width:13px;height:13px;border:1px solid #c4c2b3;background:linear-gradient(135deg,#efede2,#fdfdfb);"></div>
<div style="left:527px;top:439px;width:16px;height:20px;background:#eeebdc;border:1px solid #cfcdbf;border-radius:3px;"></div>
<span class="t" style="left:530px;top:441.02px;color:#b9b7a8;font-size:11.5px;letter-spacing:0.11px;transform:scaleX(1.07);">...</span>
<div style="left:543px;top:439px;width:140px;height:20px;background:#ece9d8;border:1px solid #c6c4b5;"></div>
<div style="left:668px;top:439px;width:15px;height:10px;background:#eeebdc;border:1px solid #cfcdbf;"></div>
<div style="left:668px;top:449px;width:15px;height:10px;background:#eeebdc;border:1px solid #cfcdbf;"></div>
<svg style="left:672.5px;top:442.5px" width="6" height="3.5" viewBox="0 0 6 3.5"><path d="M0 3.5 L3 0 L6 3.5Z" fill="#c6c4b6"/></svg>
<svg style="left:672.5px;top:452.5px" width="6" height="3.5" viewBox="0 0 6 3.5"><path d="M0 0 L3 3.5 L6 0Z" fill="#c6c4b6"/></svg>
<span class="t" style="left:547.7px;top:441.02px;color:#b9b7a8;font-size:11.5px;letter-spacing:0.19px;transform:scaleX(1.07);">02.08.2017 14:38:12</span>
<div style="left:857px;top:439px;width:16px;height:20px;background:#eeebdc;border:1px solid #cfcdbf;border-radius:3px;"></div>
<span class="t" style="left:860px;top:441.02px;color:#b9b7a8;font-size:11.5px;letter-spacing:0.11px;transform:scaleX(1.07);">...</span>
<div style="left:873px;top:439px;width:140px;height:20px;background:#ece9d8;border:1px solid #c6c4b5;"></div>
<div style="left:998px;top:439px;width:15px;height:10px;background:#eeebdc;border:1px solid #cfcdbf;"></div>
<div style="left:998px;top:449px;width:15px;height:10px;background:#eeebdc;border:1px solid #cfcdbf;"></div>
<svg style="left:1002.5px;top:442.5px" width="6" height="3.5" viewBox="0 0 6 3.5"><path d="M0 3.5 L3 0 L6 3.5Z" fill="#c6c4b6"/></svg>
<svg style="left:1002.5px;top:452.5px" width="6" height="3.5" viewBox="0 0 6 3.5"><path d="M0 0 L3 3.5 L6 0Z" fill="#c6c4b6"/></svg>
<span class="t" style="left:877px;top:441.02px;color:#b9b7a8;font-size:11.5px;letter-spacing:0.21px;transform:scaleX(1.07);">18.05.2033 06:33:20</span>
<div class="cb" style="left:474px;top:471px;width:13px;height:13px"></div>
<span class="t" style="left:778px;top:259.02px;color:#000;font-size:11.5px;letter-spacing:0.03px;transform:scaleX(1.07);">Внешний ID</span>
<span class="t" style="left:805.4px;top:289.02px;color:#000;font-size:11.5px;letter-spacing:0px;transform:scaleX(1.0445);">Баланс</span>
<span class="t" style="left:776.6px;top:319.02px;color:#000;font-size:11.5px;letter-spacing:0px;transform:scaleX(1.0608);">Ставка НСП</span>
<span class="t" style="left:703.2px;top:350.02px;color:#000;font-size:11.5px;letter-spacing:0.28px;transform:scaleX(1.07);">Рекомендуемый платеж</span>
<span class="t" style="left:759.7px;top:381.02px;color:#000;font-size:11.5px;letter-spacing:0.61px;transform:scaleX(1.07);">Авт. включать</span>
<div class="inp" style="left:857px;top:257px;width:156px;height:20px"></div>
<div class="inpd" style="left:857px;top:287px;width:156px;height:20px"></div>
<span class="t" style="left:861.5px;top:289.02px;color:#000;font-size:11.5px;letter-spacing:0px;transform:scaleX(1.05);">0.0</span>
<div class="inp" style="left:857px;top:317px;width:156px;height:20px"></div>
<span class="t" style="left:861.5px;top:319.02px;color:#000;font-size:11.5px;letter-spacing:0px;transform:scaleX(1.05);">0.0</span>
<span class="t" style="left:1013px;top:319.02px;color:#000;font-size:11.5px;letter-spacing:0px;transform:scaleX(1.07);">%</span>
<div class="inpd" style="left:857px;top:348px;width:156px;height:20px"></div>
<span class="t" style="left:861.5px;top:350.02px;color:#000;font-size:11.5px;letter-spacing:0px;transform:scaleX(1.05);">0.0</span>
<div class="cb" style="left:857px;top:382px;width:13px;height:13px"></div>
<div style="left:863px;top:501px;width:68px;height:24px;border:1px solid #6e7787;border-radius:3.5px;background:linear-gradient(180deg,#8eb0ea,#7ea2e2 50%,#3c6dc6);"></div>
<div class="btn" style="left:866px;top:504px;width:62px;height:18px;border:none;border-radius:1px;"></div>
<svg style="left:878.8px;top:503.6px" width="18" height="19" viewBox="0 0 18 19"><g transform="scale(1.1)"><ellipse cx="5.6" cy="14.9" rx="4.4" ry=".9" fill="#000" opacity=".16"/><path d="M1.2 8 L4.8 14 L13.4 1.6" fill="none" stroke="url(#gChk)" stroke-width="2.7" stroke-linecap="round" stroke-linejoin="round"/></g></svg>
<span class="t" style="left:899.7px;top:505.02px;color:#000;font-size:11.5px;letter-spacing:0px;transform:scaleX(0.9383);">OK</span>
<div class="btn" style="left:941px;top:501px;width:97px;height:24px;"></div>
<svg style="left:956.7px;top:505px" width="16" height="16" viewBox="0 0 16 16"><circle cx="8" cy="8" r="5.9" fill="url(#gRed)"/><path d="M5.4 10.6 L10.5 5.4" stroke="#f1eeee" stroke-width="1.4" stroke-linecap="round"/></svg>
<span class="t" style="left:977.8px;top:505.02px;color:#000;font-size:11.5px;letter-spacing:0px;transform:scaleX(1.0566);">Отмена</span>
</div></body></html>
